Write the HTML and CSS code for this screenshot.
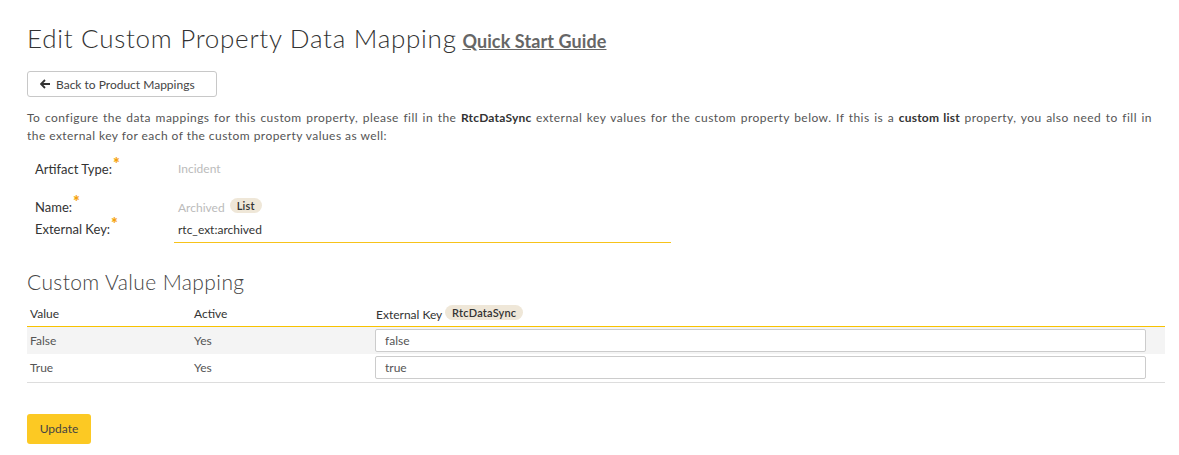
FILE: index.html
```html
<!DOCTYPE html>
<html>
<head>
<meta charset="utf-8">
<link rel="stylesheet" href="styles.css">
</head>
<body>
<div class="page">
  <h1 class="title">Edit Custom Property Data Mapping <a class="guide" href="#">Quick Start Guide</a></h1>
  <button class="back-btn"><svg class="arrow" width="11" height="10" viewBox="0 0 11 10"><path d="M5 1 L1 5 L5 9 M1 5 H10" fill="none" stroke="#333" stroke-width="1.8" stroke-linejoin="miter"/></svg>Back to Product Mappings</button>
  <p class="intro"><span class="line1">To configure the data mappings for this custom property, please fill in the <b>RtcDataSync</b> external key values for the custom property below. If this is a <b>custom list</b> property, you also need to fill in</span> the external key for each of the custom property values as well:</p>

  <div class="form">
    <div class="row row-type">
      <div class="label">Artifact Type:<span class="req">*</span></div>
      <div class="value muted">Incident</div>
    </div>
    <div class="row row-name">
      <div class="label">Name:<span class="req">*</span></div>
      <div class="value muted">Archived <span class="badge">List</span></div>
    </div>
    <div class="row row-key">
      <div class="label">External Key:<span class="req">*</span></div>
      <div class="value"><div class="key-input">rtc_ext:archived</div></div>
    </div>
  </div>

  <h2 class="subtitle">Custom Value Mapping</h2>

  <table class="grid">
    <thead>
      <tr>
        <th class="c1">Value</th>
        <th class="c2">Active</th>
        <th class="c3">External Key <span class="badge">RtcDataSync</span></th>
      </tr>
    </thead>
    <tbody>
      <tr class="odd">
        <td>False</td>
        <td>Yes</td>
        <td><div class="cell-input">false</div></td>
      </tr>
      <tr>
        <td>True</td>
        <td>Yes</td>
        <td><div class="cell-input">true</div></td>
      </tr>
    </tbody>
  </table>

  <button class="update-btn">Update</button>
</div>
</body>
</html>
```

FILE: styles.css
```css
* { box-sizing: border-box; }
body {
  margin: 0;
  background: #fff;
  font-family: "Lato", "Open Sans", sans-serif;
  color: #444;
}
.page {
  padding: 22px 14px 0 27px;
}
.title {
  margin: 0;
  font-size: 26px;
  line-height: 32px;
  font-weight: 300;
  color: #333;
  letter-spacing: 0.72px;
}
.guide {
  font-size: 18px;
  font-weight: 700;
  color: #666;
  text-decoration: underline;
  letter-spacing: 0.1px;
  margin-left: -2px;
}
.back-btn {
  display: flex;
  align-items: center;
  margin-top: 14px;
  width: 190px;
  height: 26px;
  padding: 0 0 0 12px;
  border: 1px solid #c8c8c8;
  border-radius: 3px;
  background: #fff;
  font-family: "Lato", sans-serif;
  font-size: 12px;
  color: #444;
}
.arrow { margin-right: 5px; }
.intro {
  margin: 12px 0 0 0;
  font-size: 12px;
  line-height: 18px;
  color: #555;
  letter-spacing: 0.45px;
}
.line1 {
  display: block;
  text-align: justify;
  text-align-last: justify;
  margin-right: 13px;
}
.intro b { font-weight: 700; color: #333; letter-spacing: 0.2px; }
.form {
  margin-top: 14px;
  padding-left: 8px;
}
.row {
  display: flex;
  align-items: center;
}
.label {
  width: 143px;
  font-size: 13px;
  line-height: 18px;
  color: #333;
}
.req {
  color: #f5a20a;
  font-weight: 900;
  font-size: 16px;
  line-height: 10px;
  position: relative;
  top: -4px;
  margin-left: 1px;
}
.muted { color: #bbb; font-size: 12px; line-height: 18px; }
.row-type { height: 20px; }
.row-name { height: 20px; margin-top: 18px; }
.row-key { height: 26px; align-items: flex-start; }
.row-key .label { padding-top: 3px; }
.badge {
  display: inline-block;
  background: #efe7d8;
  color: #333;
  font-size: 11px;
  line-height: 15px;
  padding: 0 7px;
  border-radius: 8px;
  vertical-align: 2px;
  font-weight: 600;
  letter-spacing: 0.2px;
  margin-left: 2px;
}
.key-input {
  margin-left: -4px;
  width: 497px;
  height: 26px;
  padding: 4px 0 0 4px;
  font-size: 12px;
  line-height: 18px;
  color: #333;
  border-bottom: 1px solid #f7c31a;
}
.subtitle {
  margin: 26px 0 0 0;
  font-size: 21px;
  line-height: 26px;
  font-weight: 300;
  color: #444;
  letter-spacing: 0.4px;
}
.grid {
  margin-top: 5px;
  width: 1138px;
  border-collapse: collapse;
  font-size: 12px;
}
.grid th {
  text-align: left;
  font-weight: 400;
  color: #333;
  height: 26px;
  padding: 2px 3px 0 3px;
  border-bottom: 1px solid #f8c200;
}
.grid th.c1 { width: 164px; }
.grid th.c2 { width: 182px; }
.grid th .badge { margin-left: 0; }
.grid td {
  height: 28px;
  padding: 0 3px;
  color: #555;
}
.grid tbody tr:last-child td { border-bottom: 1px solid #ddd; }
.grid tr.odd td { background: #f4f4f4; }
.grid td:last-child { padding: 0 19px 0 2px; }
.cell-input {
  height: 23px;
  border: 1px solid #ccc;
  border-radius: 2px;
  background: #fff;
  padding: 3px 0 0 9px;
  font-size: 12px;
  color: #555;
}
.update-btn {
  display: block;
  margin-top: 31px;
  width: 64px;
  height: 30px;
  border: none;
  border-radius: 3px;
  background: #fcc923;
  font-family: "Lato", sans-serif;
  font-size: 12px;
  color: #444;
}
```
